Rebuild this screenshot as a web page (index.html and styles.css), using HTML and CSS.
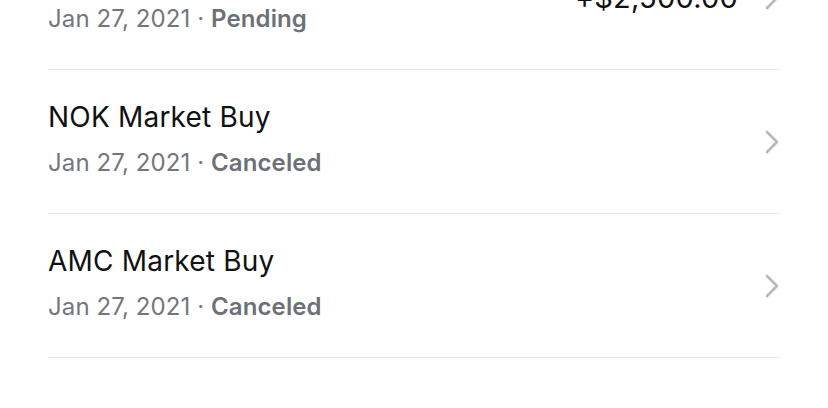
FILE: index.html
```html
<!DOCTYPE html>
<html lang="en">
<head>
    <meta charset="UTF-8">
    <meta name="viewport" content="width=device-width, initial-scale=1.0">
    <title>Order History</title>
  <link rel="stylesheet" href="styles.css">
</head>
<body>
    <div class="history">
        <div class="order">
            <div class="info">
                <div class="name">GME Market Buy</div>
                <div class="meta">Jan 27, 2021 · <strong>Pending</strong></div>
            </div>
            <div class="amount">+$2,500.00</div>
            <svg class="chevron" width="14" height="24" viewBox="0 0 14 24"><path d="M2 2 L12 12 L2 22" fill="none" stroke="#b6babe" stroke-width="2.8" stroke-linecap="round" stroke-linejoin="round"/></svg>
        </div>
        <div class="order">
            <div class="info">
                <div class="name">NOK Market Buy</div>
                <div class="meta">Jan 27, 2021 · <strong>Canceled</strong></div>
            </div>
            <svg class="chevron" width="14" height="24" viewBox="0 0 14 24"><path d="M2 2 L12 12 L2 22" fill="none" stroke="#b6babe" stroke-width="2.8" stroke-linecap="round" stroke-linejoin="round"/></svg>
        </div>
        <div class="order">
            <div class="info">
                <div class="name">AMC Market Buy</div>
                <div class="meta">Jan 27, 2021 · <strong>Canceled</strong></div>
            </div>
            <svg class="chevron" width="14" height="24" viewBox="0 0 14 24"><path d="M2 2 L12 12 L2 22" fill="none" stroke="#b6babe" stroke-width="2.8" stroke-linecap="round" stroke-linejoin="round"/></svg>
        </div>
    </div>
</body>
</html>
```

FILE: styles.css
```css
body {
    font-family: Inter, "Liberation Sans", Arial, sans-serif;
    margin: 0;
    padding: 0;
    background-color: #fff;
    overflow: hidden;
}

.history {
    margin: -74px 48px 0 48px;
}

.order {
    display: flex;
    align-items: center;
    box-sizing: border-box;
    height: 144px;
    border-bottom: 1px solid #e8e8e8;
}

.info {
    flex: 1;
    align-self: flex-start;
    padding-top: 31px;
}

.name {
    font-size: 28px;
    line-height: 32px;
    letter-spacing: 0.2px;
    color: #111;
}

.meta {
    margin-top: 15px;
    font-size: 24px;
    line-height: 30px;
    letter-spacing: 0.1px;
    color: #73777c;
}

.meta strong {
    font-weight: 600;
    color: #6c7176;
}

.amount {
    font-size: 29px;
    line-height: 32px;
    letter-spacing: 0.2px;
    color: #111;
    margin-right: 27px;
}

.chevron {
    display: block;
    margin-right: 1px;
}
```
